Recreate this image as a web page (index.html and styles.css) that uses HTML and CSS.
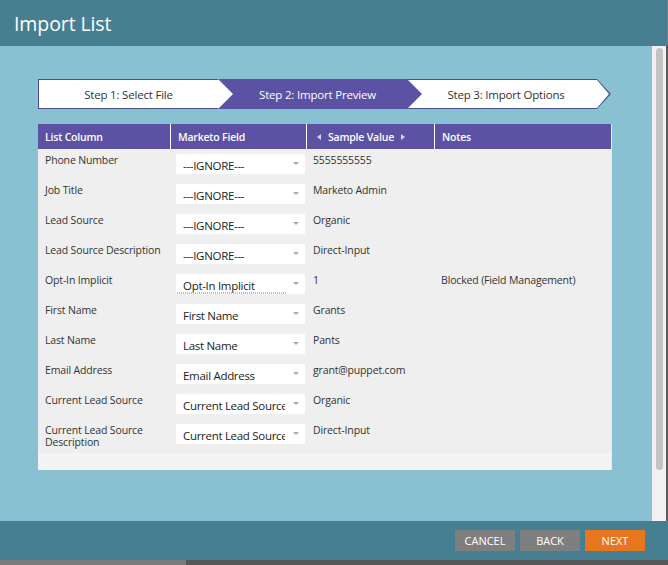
FILE: index.html
```html
<!DOCTYPE html>
<html lang="en">
<head>
  <meta charset="UTF-8" />
  <meta name="viewport" content="width=device-width, initial-scale=1.0" />
  <title>Import List</title>
  <link rel="stylesheet" href="styles.css">
</head>
<body>
  <div class="dialog">
    <div class="titlebar">
      <h1>Import List</h1>
    </div>

    <div class="middle">
      <div class="content">
        <div class="steps">
          <div class="step step1">Step 1: Select File</div>
          <div class="step step2">Step 2: Import Preview</div>
          <div class="step step3">Step 3: Import Options</div>
        </div>

        <div class="panel">
          <div class="row head">
            <div class="cell">List Column</div>
            <div class="cell">Marketo Field</div>
            <div class="cell"><span class="tri left"></span>Sample Value<span class="tri right"></span></div>
            <div class="cell">Notes</div>
          </div>

          <div class="row">
            <div class="cell label">Phone Number</div>
            <div class="cell field"><div class="combo"><span class="combo-text">---IGNORE---</span></div></div>
            <div class="cell label">5555555555</div>
            <div class="cell label"></div>
          </div>
          <div class="row">
            <div class="cell label">Job Title</div>
            <div class="cell field"><div class="combo"><span class="combo-text">---IGNORE---</span></div></div>
            <div class="cell label">Marketo Admin</div>
            <div class="cell label"></div>
          </div>
          <div class="row">
            <div class="cell label">Lead Source</div>
            <div class="cell field"><div class="combo"><span class="combo-text">---IGNORE---</span></div></div>
            <div class="cell label">Organic</div>
            <div class="cell label"></div>
          </div>
          <div class="row">
            <div class="cell label">Lead Source Description</div>
            <div class="cell field"><div class="combo"><span class="combo-text">---IGNORE---</span></div></div>
            <div class="cell label">Direct-Input</div>
            <div class="cell label"></div>
          </div>
          <div class="row">
            <div class="cell label">Opt-In Implicit</div>
            <div class="cell field"><div class="combo spell"><span class="combo-text">Opt-In Implicit</span></div></div>
            <div class="cell label">1</div>
            <div class="cell label">Blocked (Field Management)</div>
          </div>
          <div class="row">
            <div class="cell label">First Name</div>
            <div class="cell field"><div class="combo"><span class="combo-text">First Name</span></div></div>
            <div class="cell label">Grants</div>
            <div class="cell label"></div>
          </div>
          <div class="row">
            <div class="cell label">Last Name</div>
            <div class="cell field"><div class="combo"><span class="combo-text">Last Name</span></div></div>
            <div class="cell label">Pants</div>
            <div class="cell label"></div>
          </div>
          <div class="row">
            <div class="cell label">Email Address</div>
            <div class="cell field"><div class="combo"><span class="combo-text">Email Address</span></div></div>
            <div class="cell label">grant@puppet.com</div>
            <div class="cell label"></div>
          </div>
          <div class="row">
            <div class="cell label">Current Lead Source</div>
            <div class="cell field"><div class="combo"><span class="combo-text">Current Lead Source</span></div></div>
            <div class="cell label">Organic</div>
            <div class="cell label"></div>
          </div>
          <div class="row tall">
            <div class="cell label">Current Lead Source Description</div>
            <div class="cell field"><div class="combo"><span class="combo-text">Current Lead Source Description</span></div></div>
            <div class="cell label">Direct-Input</div>
            <div class="cell label"></div>
          </div>
          <div class="filler"></div>
        </div>
      </div>

      <div class="scrollbar">
        <div class="thumb"></div>
      </div>
    </div>

    <div class="footer">
      <button class="btn">CANCEL</button>
      <button class="btn">BACK</button>
      <button class="btn primary">NEXT</button>
    </div>
    <div class="bottom-strip"><div class="strip-left"></div></div>
  </div>
</body>
</html>
```

FILE: styles.css
```css
* {
  box-sizing: border-box;
}
body {
  margin: 0;
  font-family: "Open Sans", "Liberation Sans", sans-serif;
  background: #555;
}
.dialog {
  width: 668px;
  height: 565px;
  display: flex;
  flex-direction: column;
  overflow: hidden;
}
.titlebar {
  height: 46px;
  flex: none;
  background: #477f91;
  border-right: 1px solid #6b7f87;
  display: flex;
  align-items: center;
  padding-left: 14px;
}
.titlebar h1 {
  margin: 0;
  color: #fff;
  font-size: 19.5px;
  font-weight: 400;
  letter-spacing: -0.1px;
}
.middle {
  height: 475px;
  flex: none;
  display: flex;
}
.content {
  flex: 1;
  background: #89c0d2;
  padding: 33px 0 0 38px;
}
.scrollbar {
  width: 16px;
  flex: none;
  background: #f1f1f1;
  border-right: 2px solid #5a5a5a;
  padding: 2px 0 0 4px;
}
.thumb {
  width: 7px;
  height: 422px;
  background: #c3c3c3;
  border-radius: 4px;
}

/* step bar */
.steps {
  display: flex;
  height: 30px;
  font-size: 11.5px;
  letter-spacing: -0.2px;
}
.step {
  position: relative;
  height: 30px;
  display: flex;
  align-items: center;
  justify-content: center;
}
.step1 {
  width: 180px;
  background: #fff;
  color: #333;
  border: 1px solid #4c4f8c;
  border-right: none;
  z-index: 2;
}
.step1::after {
  content: "";
  position: absolute;
  right: -15px;
  top: -1px;
  width: 15px;
  height: 30px;
  background: #fff;
  clip-path: polygon(0 0, 100% 50%, 0 100%);
}
.step2 {
  width: 189px;
  background: #5b52a3;
  color: #fff;
  padding-left: 10px;
  z-index: 1;
}
.step2::after {
  content: "";
  position: absolute;
  right: -15px;
  top: 0;
  width: 15px;
  height: 30px;
  background: #5b52a3;
  clip-path: polygon(0 0, 100% 50%, 0 100%);
}
.step3 {
  width: 190px;
  background: #fff;
  color: #333;
  border-top: 1px solid #4c4f8c;
  border-bottom: 1px solid #4c4f8c;
  padding-left: 8px;
}
.step3::before {
  content: "";
  position: absolute;
  right: -14px;
  top: -1px;
  width: 14px;
  height: 30px;
  background: #4c4f8c;
  clip-path: polygon(0 0, 100% 50%, 0 100%);
}
.step3::after {
  content: "";
  position: absolute;
  right: -12px;
  top: 0;
  width: 12px;
  height: 28px;
  background: #fff;
  clip-path: polygon(0 0, 100% 50%, 0 100%);
}

/* import preview table */
.panel {
  margin-top: 15px;
  width: 574px;
  background: #f4f4f4;
  border-right: 1px solid #e8e8f0;
}
.row {
  display: grid;
  grid-template-columns: 132px 136px 128px 1fr;
  height: 30px;
  background: #efefef;
  font-size: 10.5px;
  letter-spacing: -0.15px;
  color: #333;
}
.row.tall {
  height: 34px;
}
.row.head {
  height: 25px;
  background: #5b52a3;
  color: #fff;
  font-weight: 600;
  letter-spacing: -0.2px;
}
.head .cell {
  display: flex;
  align-items: center;
  padding-left: 7px;
}
.head .cell + .cell {
  border-left: 1px solid #fff;
}
.tri {
  width: 0;
  height: 0;
  border-top: 3px solid transparent;
  border-bottom: 3px solid transparent;
}
.tri.left {
  border-right: 4px solid #d6d4ee;
  margin: 0 7px 0 3px;
}
.tri.right {
  border-left: 4px solid #d6d4ee;
  margin-left: 7px;
}
.label {
  padding: 5px 0 0 7px;
  line-height: 12px;
}
.field {
  padding: 5px 0 0 6px;
}
.combo {
  position: relative;
  width: 129px;
  height: 20px;
  background: #fff;
  font-size: 11.5px;
  letter-spacing: -0.3px;
  color: #222;
  padding: 4px 20px 0 7px;
  line-height: 16px;
}
.combo-text {
  display: block;
  white-space: nowrap;
  overflow: hidden;
}
.combo::after {
  content: "";
  position: absolute;
  right: 6px;
  top: 8px;
  border-left: 3px solid transparent;
  border-right: 3px solid transparent;
  border-top: 3px solid #aaa;
}
.spell::before {
  content: "";
  position: absolute;
  left: 1px;
  right: 19px;
  bottom: 0;
  height: 2px;
  background: repeating-linear-gradient(90deg, #8fdc8f 0 1px, transparent 1px 2px);
}
.filler {
  height: 17px;
}

/* footer */
.footer {
  height: 39px;
  flex: none;
  background: #457f91;
  display: flex;
  justify-content: flex-end;
  align-items: flex-start;
  gap: 5px;
  padding: 9px 23px 0 0;
}
.btn {
  width: 60px;
  height: 21px;
  border: none;
  background: #7f7f7f;
  color: #fff;
  font-family: "Open Sans", "Liberation Sans", sans-serif;
  font-size: 11px;
  padding: 0;
}
.btn.primary {
  background: #e8761f;
}
.bottom-strip {
  height: 5px;
  flex: none;
  background: #575757;
}
.strip-left {
  width: 186px;
  height: 5px;
  background: #7b7b7b;
}
```
